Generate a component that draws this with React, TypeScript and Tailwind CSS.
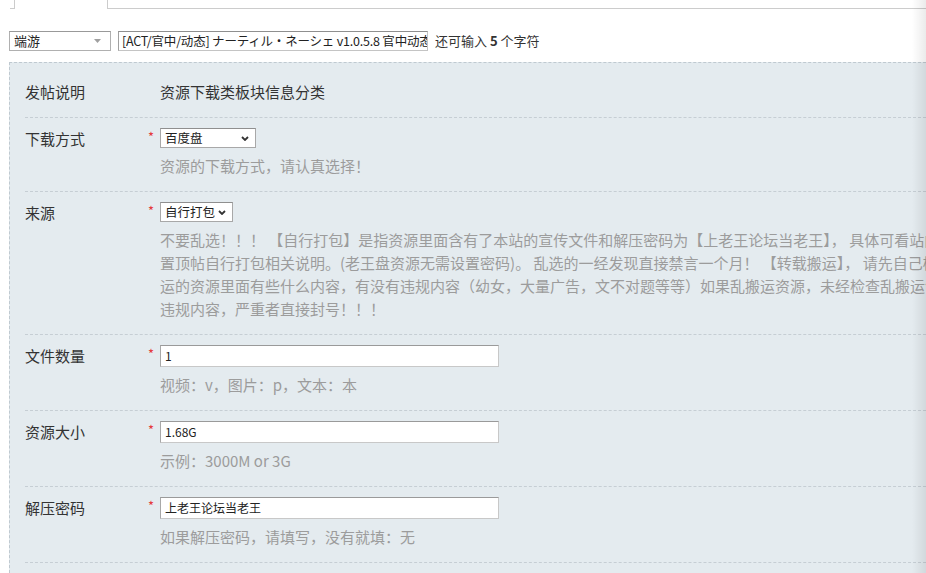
import React from "react";

const Chevron = () => (
  <svg width="8" height="5" viewBox="0 0 8 5" className="shrink-0">
    <polyline points="1,1 4,4 7,1" fill="none" stroke="#333" strokeWidth="1.8" />
  </svg>
);

const Sel = ({ text, w }: { text: string; w: string }) => (
  <div
    className={`flex h-[20px] items-center justify-between border border-[#a8a8a8] border-t-[#8f8f8f] bg-white pl-[4px] pr-[6px] text-[12.5px] leading-[18px] text-[#222] ${w}`}
  >
    <span>{text}</span>
    <Chevron />
  </div>
);

const Inp = ({ value }: { value: string }) => (
  <div className="flex h-[22px] w-[339px] items-center border border-[#c8c8c8] border-t-[#9a9a9a] border-l-[#a8a8a8] bg-white pl-[4px] text-[12px] text-[#222]">
    {value}
  </div>
);

const Star = () => (
  <div className="w-[12px] shrink-0 text-[13px] leading-[18px] text-[#e4393c]">*</div>
);

const Row = ({
  label,
  star = true,
  children,
  hint,
}: {
  label: string;
  star?: boolean;
  children: React.ReactNode;
  hint?: React.ReactNode;
}) => (
  <div className="flex border-b border-dashed border-[#c6ced4] pt-[10px] pb-[14px]">
    <div className="w-[123px] shrink-0 text-[15px] leading-[22px] text-[#333]">{label}</div>
    {star ? <Star /> : <div className="w-[12px] shrink-0" />}
    <div className="min-w-0 flex-1">
      {children}
      {hint && (
        <div className="mt-[6px] text-[15px] leading-[23px] text-[#9c9c9c]">{hint}</div>
      )}
    </div>
  </div>
);

export default function App() {
  return (
    <div className="relative h-[573px] w-[926px] overflow-hidden bg-white font-['Noto_Sans_CJK_SC',sans-serif]">
      {/* tab strip */}
      <div className="flex h-[9px]">
        <div className="ml-[10px] w-[4px] border-b border-[#cccccc]" />
        <div className="w-[94px] border-l border-r border-[#cccccc]" />
        <div className="flex-1 border-b border-[#cccccc]" />
      </div>

      {/* subject row */}
      <div className="mt-[22px] flex h-[20px] items-center pl-[9px]">
        <div className="flex h-[20px] w-[102px] items-center justify-between border border-[#b0b0b0] border-t-[#999] bg-white pl-[4px] pr-[9px] text-[13px] text-[#222]">
          <span>端游</span>
          <svg width="7" height="4" viewBox="0 0 7 4">
            <polygon points="0,0 7,0 3.5,4" fill="#a0a0a0" />
          </svg>
        </div>
        <div className="ml-[7px] flex h-[20px] w-[310px] shrink-0 items-center overflow-hidden whitespace-nowrap border border-[#c4c4c4] border-t-[#8f8f8f] border-l-[#a0a0a0] bg-white pl-[3px] text-[12.5px] tracking-[-0.2px] text-[#222]">
          [ACT/官中/动态] ナーティル・ネーシェ v1.0.5.8 官中动态
        </div>
        <div className="ml-[7px] whitespace-nowrap text-[13px] text-[#333]">
          还可输入 <b>5</b> 个字符
        </div>
      </div>

      {/* form box */}
      <div className="ml-[9px] mt-[11px] border-l border-t border-dashed border-[#bfc9d0] bg-[#e4ebef] pl-[15px] pt-[8px] pb-[20px]">
        <Row label="发帖说明" star={false}>
          <div className="text-[15px] leading-[22px] text-[#333]">资源下载类板块信息分类</div>
        </Row>
        <Row label="下载方式" hint="资源的下载方式，请认真选择！">
          <Sel text="百度盘" w="w-[96px]" />
        </Row>
        <Row
          label="来源"
          hint={
            <div className="whitespace-nowrap">
              <div>不要乱选！！！ 【自行打包】是指资源里面含有了本站的宣传文件和解压密码为【上老王论坛当老王】， 具体可看站内</div>
              <div>置顶帖自行打包相关说明。(老王盘资源无需设置密码)。 乱选的一经发现直接禁言一个月！ 【转载搬运】， 请先自己检查搬</div>
              <div>运的资源里面有些什么内容，有没有违规内容（幼女，大量广告，文不对题等等）如果乱搬运资源，未经检查乱搬运包含</div>
              <div>违规内容，严重者直接封号！！！</div>
            </div>
          }
        >
          <Sel text="自行打包" w="w-[73px]" />
        </Row>
        <Row label="文件数量" hint="视频：v，图片：p，文本：本">
          <Inp value="1" />
        </Row>
        <Row label="资源大小" hint="示例：3000M or 3G">
          <Inp value="1.68G" />
        </Row>
        <Row label="解压密码" hint="如果解压密码，请填写，没有就填：无">
          <Inp value="上老王论坛当老王" />
        </Row>
      </div>

      {/* right edge shade */}
      <div className="pointer-events-none absolute right-0 top-0 h-full w-[14px] bg-gradient-to-r from-transparent to-black/[0.08]" />
    </div>
  );
}
